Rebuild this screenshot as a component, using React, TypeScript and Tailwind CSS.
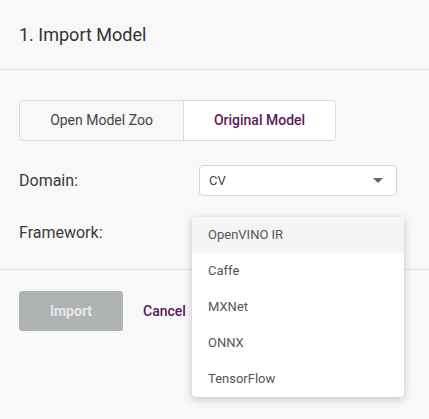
import * as React from 'react';

const frameworks = ['OpenVINO IR', 'Caffe', 'MXNet', 'ONNX', 'TensorFlow'];

export default function App() {
    return (
        <div
            className="relative h-[419px] w-[429px] overflow-hidden bg-[#f8f8f8] text-[#333333]"
            style={{ fontFamily: 'Roboto, "Liberation Sans", sans-serif' }}>
            {/* header */}
            <div className="flex h-[70px] items-center border-b border-[#e2e2e2] px-[19px]">
                <h1 className="text-[18px] leading-none">1. Import Model</h1>
            </div>

            <div className="px-[19px] pt-[30px]">
                {/* tabs */}
                <div className="flex h-[41px] w-[317px] overflow-hidden rounded-[4px] border border-[#dadada] text-[14px]">
                    <button className="flex w-[164px] items-center justify-center border-r border-[#dadada] bg-[#f8f8f8] text-[#444444]">
                        Open Model Zoo
                    </button>
                    <button className="flex flex-1 items-center justify-center bg-white font-medium text-[#5a1a55]">
                        Original Model
                    </button>
                </div>

                {/* domain */}
                <div className="mt-[24px] flex h-[31px] items-center">
                    <span className="w-[180px] text-[16px] text-[#3a3a3a]">Domain:</span>
                    <div className="flex h-[31px] w-[198px] items-center justify-between rounded-[4px] border border-[#d6d6d6] bg-white pl-[9px] pr-[13px]">
                        <span className="text-[13px] text-[#444444]">CV</span>
                        <svg width="10" height="5" viewBox="0 0 10 5">
                            <path d="M0 0h10L5 5z" fill="#666666" />
                        </svg>
                    </div>
                </div>

                {/* framework */}
                <div className="mt-[21px] flex h-[31px] items-center">
                    <span className="w-[180px] text-[16px] text-[#3a3a3a]">Framework:</span>
                </div>
            </div>

            <div className="mt-[21px] border-b border-[#e2e2e2]" />

            {/* actions */}
            <div className="flex items-center gap-[20px] px-[19px] pt-[21px]">
                <button className="h-[40px] w-[104px] rounded-[3px] bg-[#b0b3b3] text-[14px] font-bold text-[#e6e6ea]">
                    Import
                </button>
                <span className="text-[14px] font-medium text-[#5a1a55]">Cancel</span>
            </div>

            {/* dropdown menu */}
            <ul className="absolute left-[192px] top-[217px] w-[212px] overflow-hidden rounded-[4px] bg-white py-0 shadow-[0_2px_8px_rgba(0,0,0,0.22)]">
                {frameworks.map((f, i) => (
                    <li
                        key={f}
                        className={`flex h-[36px] items-center px-[16px] text-[13px] text-[#555555] ${
                            i === 0 ? 'bg-[#f5f5f5]' : ''
                        }`}>
                        {f}
                    </li>
                ))}
            </ul>
        </div>
    );
}
